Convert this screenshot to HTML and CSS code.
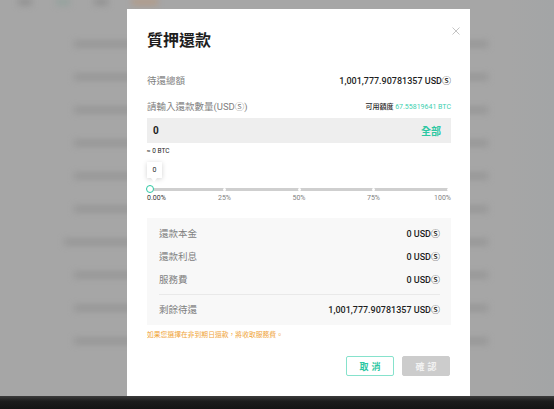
FILE: index.html
```html
<!doctype html>
<html>
    <head>
        <meta charset="utf-8">
        <title>質押還款</title>
        <link rel="stylesheet" href="styles.css">
    </head>
    <body>
        <div class="screen">
            <div class="page">
                <div class="nav">
                    <span class="blob"></span>
                    <span class="blob teal"></span>
                    <span class="blob"></span>
                    <span class="blob orange"></span>
                </div>
                <div class="table">
                    <div class="line"></div>
                    <div class="line"></div>
                    <div class="line"></div>
                    <div class="line"></div>
                    <div class="line"></div>
                    <div class="line"></div>
                    <div class="line wide"></div>
                    <div class="line"></div>
                    <div class="line"></div>
                    <div class="line"></div>
                </div>
            </div>

            <div class="modal">
                <span class="close">
                    <svg width="8" height="8" viewBox="0 0 8 8"><path d="M0.5 0.5L7.5 7.5M7.5 0.5L0.5 7.5" stroke="#c4c4c4" stroke-width="1"/></svg>
                </span>
                <h1 class="title">質押還款</h1>

                <div class="row total">
                    <span class="label">待還總額</span>
                    <span class="value">1,001,777.90781357 USDⓈ</span>
                </div>

                <div class="row ask">
                    <span class="label">請輸入還款數量(USDⓈ)</span>
                    <span class="avail">可用額度 <em>67.55819641 BTC</em></span>
                </div>

                <div class="amount">
                    <span class="amount-value">0</span>
                    <span class="all">全部</span>
                </div>
                <div class="approx">≈ 0 BTC</div>

                <div class="slider">
                    <div class="tip">0</div>
                    <div class="track">
                        <span class="mark" style="left: 25%"></span>
                        <span class="mark" style="left: 50%"></span>
                        <span class="mark" style="left: 75%"></span>
                        <span class="mark" style="left: 100%"></span>
                        <span class="handle" style="left: 0%"></span>
                    </div>
                    <div class="ticks">
                        <span class="tick first">0.00%</span>
                        <span class="tick" style="left: 25%">25%</span>
                        <span class="tick" style="left: 50%">50%</span>
                        <span class="tick" style="left: 75%">75%</span>
                        <span class="tick last">100%</span>
                    </div>
                </div>

                <div class="summary">
                    <div class="sum-row"><span class="label">還款本金</span><span class="value">0 USDⓈ</span></div>
                    <div class="sum-row"><span class="label">還款利息</span><span class="value">0 USDⓈ</span></div>
                    <div class="sum-row"><span class="label">服務費</span><span class="value">0 USDⓈ</span></div>
                    <div class="divider"></div>
                    <div class="sum-row"><span class="label">剩餘待還</span><span class="value">1,001,777.90781357 USDⓈ</span></div>
                </div>

                <p class="warning">如果您選擇在非到期日還款，將收取服務費。</p>

                <div class="actions">
                    <button class="btn cancel">取消</button>
                    <button class="btn confirm">確認</button>
                </div>
            </div>
        </div>
        <div class="taskbar"></div>
    </body>
</html>
```

FILE: styles.css
```css
body {
    --teal: #2cc7a2;
    --label: #7f7f7f;
    --text: #1e1e1e;
    margin: 0;
    background: #a6a6a6;
    font-family: Roboto, "Noto Sans CJK TC", sans-serif;
    color: var(--text);
}
.screen {
    position: relative;
    height: 396px;
    overflow: hidden;
    background: linear-gradient(90deg, #a6a6a6 0%, #a6a6a6 92%, #a3a5a6 100%);
}

/* page behind the dialog */
.page {
    filter: blur(3px);
}
.nav {
    display: flex;
    gap: 24px;
    padding: 0 0 0 18px;
    height: 8px;
}
.blob {
    width: 14px;
    height: 6px;
    margin-top: -1px;
    background: #909090;
}
.blob.teal {
    background: #93a29d;
}
.blob.orange {
    width: 26px;
    background: #b39a86;
}
.table {
    display: flex;
    flex-direction: column;
    gap: 27px;
    padding: 33px 0 0 74px;
}
.line {
    width: 414px;
    height: 6px;
    background: #959595;
}
.line.wide {
    margin-left: -10px;
    width: 424px;
}

/* dialog */
.modal {
    position: absolute;
    left: 127px;
    top: 9px;
    bottom: 0;
    width: 304px;
    padding: 22px 19px 0 20px;
    background: #fff;
}
.close {
    position: absolute;
    top: 18px;
    right: 10px;
    line-height: 0;
}
.title {
    margin: 0;
    font-size: 16px;
    line-height: 20px;
    font-weight: 700;
}
.row {
    display: flex;
    justify-content: space-between;
    align-items: center;
    height: 14px;
}
.total {
    margin-top: 22px;
}
.ask {
    margin-top: 12px;
}
.label {
    font-size: 9.5px;
    color: var(--label);
}
.value {
    font-size: 9px;
    font-weight: 500;
}
.avail {
    font-size: 7px;
    font-weight: 500;
}
.avail em {
    font-style: normal;
    font-weight: 400;
    color: #3dd0b0;
}
.amount {
    display: flex;
    justify-content: space-between;
    align-items: center;
    margin-top: 5px;
    height: 25px;
    padding: 0 10px 0 6px;
    background: #eeeeee;
}
.amount-value {
    font-size: 10px;
    font-weight: 700;
}
.all {
    font-size: 10px;
    font-weight: 700;
    color: var(--teal);
}
.approx {
    margin-top: 3px;
    font-size: 6.5px;
    line-height: 10px;
}

/* percentage slider */
.slider {
    position: relative;
    margin-top: 6px;
    padding-top: 26px;
}
.tip {
    position: absolute;
    top: 0;
    left: 0;
    width: 15px;
    height: 16px;
    font-size: 7px;
    line-height: 16px;
    text-align: center;
    background: #fff;
    box-shadow: 0 1px 5px rgba(0, 0, 0, 0.18);
}
.tip::after {
    content: "";
    position: absolute;
    left: 4px;
    bottom: -4px;
    border: 3.5px solid transparent;
    border-bottom: none;
    border-top: 4px solid #fff;
}
.track {
    position: relative;
    height: 3px;
    margin: 0 3px;
    background: #cfcfcf;
}
.mark {
    position: absolute;
    top: 0;
    width: 3px;
    height: 3px;
    margin-left: -1.5px;
    border-radius: 50%;
    background: #fff;
}
.handle {
    position: absolute;
    top: -3px;
    width: 6px;
    height: 6px;
    margin-left: -4.5px;
    border: 1.5px solid var(--teal);
    border-radius: 50%;
    background: #fff;
}
.ticks {
    position: relative;
    height: 9px;
    margin: 3px 3px 0;
    font-size: 7px;
    line-height: 9px;
    color: var(--label);
}
.tick {
    position: absolute;
    transform: translateX(-50%);
}
.tick.first {
    left: -3px;
    transform: none;
    color: #333;
}
.tick.last {
    right: -3px;
    transform: none;
}

/* totals */
.summary {
    margin-top: 15px;
    padding: 3.5px 11px 4.5px 12px;
    background: #f8f8f8;
}
.sum-row {
    display: flex;
    justify-content: space-between;
    align-items: center;
    height: 23px;
}
.divider {
    height: 1px;
    margin: 3px 0;
    background: #e9e9e9;
}
.warning {
    margin: 5px 0 0;
    font-size: 6.8px;
    line-height: 10px;
    color: #f0a53a;
}
.actions {
    display: flex;
    justify-content: flex-end;
    gap: 8px;
    margin-top: 16px;
    padding-right: 1px;
}
.btn {
    width: 48px;
    height: 20px;
    padding: 0 0 0 3px;
    border-radius: 2px;
    font-family: inherit;
    font-size: 9px;
    font-weight: 700;
    letter-spacing: 3px;
}
.cancel {
    border: 1px solid #86e2cc;
    background: #fff;
    color: var(--teal);
}
.confirm {
    border: 1px solid #cccccc;
    background: #cccccc;
    color: #f2f2f2;
}

.taskbar {
    height: 13px;
    background: linear-gradient(#3c3c3c, #1c1c1c 40%, #141414);
}
```
